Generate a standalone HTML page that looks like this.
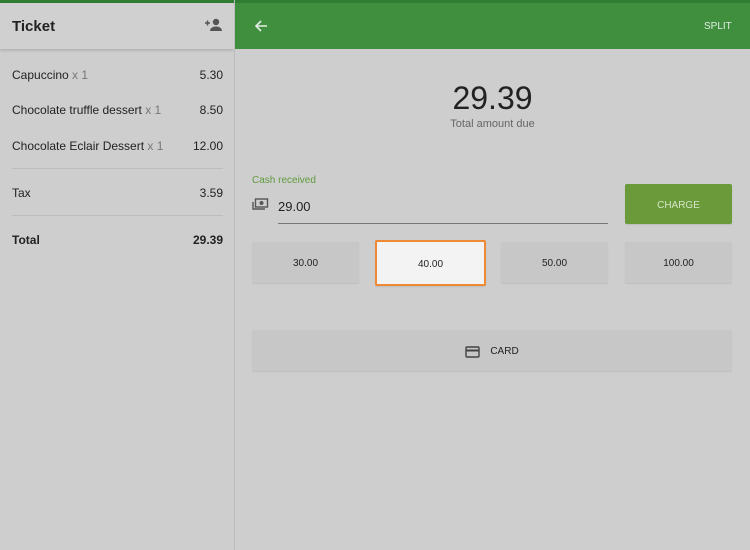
<!DOCTYPE html>
<html><head><style>
*{margin:0;padding:0;box-sizing:border-box}
body{width:750px;height:550px;background:#cecece;font-family:"Liberation Sans",sans-serif;position:relative;overflow:hidden;color:#222}
.a{position:absolute}
.row{position:absolute;left:12px;width:211px;font-size:12px;display:flex;justify-content:space-between}
.x{color:#777}
.btn{position:absolute;background:#c7c7c7;border-radius:2px;font-size:10px;display:flex;align-items:center;justify-content:center;box-shadow:0 1px 1px rgba(0,0,0,.08);padding-top:2px}
</style></head><body>
<div class="a" style="left:0;top:0;width:750px;height:3px;background:#2f7d32"></div>
<div class="a" style="left:0;top:3px;width:234px;height:46px;background:#d0d0d0;box-shadow:0 2px 2px rgba(0,0,0,.12)"></div>
<div class="a" style="left:12px;top:18px;font-size:15px;font-weight:bold;color:#222">Ticket</div>
<svg class="a" style="left:204px;top:17px" width="20" height="16" viewBox="0 0 20 16"><path d="M1 6h5M3.5 3.5v5" stroke="#555" stroke-width="1.5"/><circle cx="12" cy="5" r="3.2" fill="#555"/><path d="M6 14c0-3 3-4.5 6-4.5s6 1.5 6 4.5z" fill="#555"/></svg>
<div class="a" style="left:234px;top:0;width:1px;height:550px;background:#bcbcbc"></div>
<div class="a" style="left:235px;top:3px;width:515px;height:46px;background:#3f8f3f"></div>
<svg class="a" style="left:254px;top:19px" width="14" height="14" viewBox="0 0 14 14"><path d="M13 7H2M7 2L2 7l5 5" stroke="#e6efe6" stroke-width="1.6" fill="none"/></svg>
<div class="a" style="left:704px;top:21px;font-size:10px;color:#e0ece0">SPLIT</div>
<div class="row" style="top:68px"><span>Capuccino <span class="x">x 1</span></span><span>5.30</span></div>
<div class="row" style="top:103px"><span>Chocolate truffle dessert <span class="x">x 1</span></span><span>8.50</span></div>
<div class="row" style="top:139px"><span>Chocolate Eclair Dessert <span class="x">x 1</span></span><span>12.00</span></div>
<div class="a" style="left:12px;top:168px;width:211px;height:1px;background:#bdbdbd"></div>
<div class="row" style="top:186px"><span>Tax</span><span>3.59</span></div>
<div class="a" style="left:12px;top:215px;width:211px;height:1px;background:#bdbdbd"></div>
<div class="row" style="top:233px;font-weight:bold"><span>Total</span><span>29.39</span></div>
<div class="a" style="left:235px;top:80px;width:515px;text-align:center;font-size:32px;color:#222">29.39</div>
<div class="a" style="left:235px;top:118px;width:515px;text-align:center;font-size:11px;color:#666">Total amount due</div>
<div class="a" style="left:252px;top:175px;font-size:10px;color:#5f9a3c">Cash received</div>
<svg class="a" style="left:252px;top:198px" width="17" height="13" viewBox="0 0 17 13"><rect x="3.5" y="1" width="12" height="8" fill="none" stroke="#555" stroke-width="1.4"/><circle cx="9.5" cy="5" r="2" fill="#555"/><path d="M1 4v7h12" stroke="#555" stroke-width="1.4" fill="none"/></svg>
<div class="a" style="left:278px;top:199px;font-size:13px;color:#222">29.00</div>
<div class="a" style="left:278px;top:223px;width:330px;height:1px;background:#777"></div>
<div class="btn" style="left:625px;top:184px;width:107px;height:40px;background:#6a9a3a;color:#d5e6c8">CHARGE</div>
<div class="btn" style="left:252px;top:242px;width:107px;height:41px">30.00</div>
<div class="btn" style="left:375px;top:240px;width:111px;height:46px;background:#f3f3f3;border:2px solid #ee8a35">40.00</div>
<div class="btn" style="left:501px;top:242px;width:107px;height:41px">50.00</div>
<div class="btn" style="left:625px;top:242px;width:107px;height:41px">100.00</div>
<div class="btn" style="left:252px;top:330px;width:480px;height:41px"><svg width="15" height="12" viewBox="0 0 15 12" style="margin-right:10px"><rect x="1" y="1" width="13" height="10" rx="1" fill="none" stroke="#444" stroke-width="1.4"/><rect x="1" y="3.5" width="13" height="2" fill="#444"/></svg>CARD</div>
</body></html>
